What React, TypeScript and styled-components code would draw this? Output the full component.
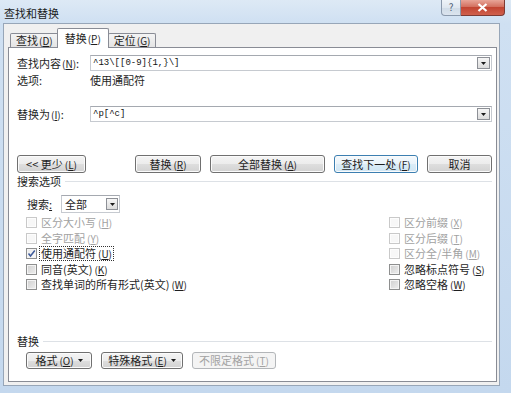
import React from 'react';
import styled, { createGlobalStyle } from 'styled-components';

const GlobalStyle = createGlobalStyle`
  html, body { margin: 0; padding: 0; }
  body {
    width: 511px;
    height: 393px;
    overflow: hidden;
    font-family: "Noto Sans CJK SC", "Noto Sans", sans-serif;
    font-size: 11px;
    line-height: 13px;
    color: #1e1e1e;
    background: #c6d9ee;
  }
`;

const Window = styled.div`
  width: 511px;
  height: 393px;
  display: flex;
  flex-direction: column;
  background: linear-gradient(180deg, #dde9f5 0px, #cfe0f2 23px, #c4d8ee 100%);
`;

const TitleBar = styled.div`
  height: 23px;
  flex: none;
  display: flex;
  justify-content: space-between;
  align-items: flex-start;
`;

const Title = styled.div`
  padding: 7px 0 0 4px;
  color: #1b1b1b;
`;

const Caption = styled.div`
  display: flex;
  margin-right: 6px;
`;

const HelpButton = styled.div`
  width: 20px;
  height: 16px;
  box-sizing: border-box;
  border: 1px solid #8a99ac;
  border-top: none;
  border-radius: 0 0 0 4px;
  background: linear-gradient(180deg, #eef3f8 0%, #dfe7ef 50%, #cfdbe7 51%, #dbe4ee 100%);
  color: #4d5d74;
  font-size: 10px;
  line-height: 14px;
  text-align: center;
`;

const CloseButton = styled.div`
  width: 44px;
  height: 16px;
  box-sizing: border-box;
  border: 1px solid #7d3a33;
  border-top: none;
  border-left: none;
  border-radius: 0 0 4px 0;
  background: linear-gradient(180deg, #e8a598 0%, #d3705f 45%, #c24532 50%, #d0604c 100%);
  display: flex;
  align-items: center;
  justify-content: center;
`;

const Client = styled.div`
  flex: 1;
  margin: 0 11px 7px 3px;
  border: 1px solid #97a6b8;
  background: #f0f0f0;
  padding: 4px 2px 3px 4px;
  display: flex;
  flex-direction: column;
`;

const TabStrip = styled.div`
  height: 19px;
  flex: none;
  display: flex;
  align-items: flex-end;
  padding-left: 2px;
`;

const Tab = styled.div<{ $active?: boolean }>`
  box-sizing: border-box;
  height: ${({ $active }) => ($active ? '20px' : '14px')};
  margin: ${({ $active }) => ($active ? '0 -1px -1px -2px' : '0')};
  padding: ${({ $active }) => ($active ? '3px 7px 0' : '0 5px')};
  border: 1px solid #898c95;
  border-bottom: none;
  border-radius: 2px 2px 0 0;
  background: ${({ $active }) => ($active ? '#ffffff' : 'linear-gradient(180deg, #f4f4f4, #e4e4e4)')};
  position: relative;
  z-index: ${({ $active }) => ($active ? 2 : 1)};
  white-space: nowrap;
`;

const Panel = styled.div`
  flex: 1;
  background: #fff;
  border: 1px solid #898c95;
  padding: 7px 4px 12px 8px;
  display: flex;
  flex-direction: column;
`;

const Key = styled.span<{ $gap?: boolean }>`
  font-size: 10px;
  margin-left: ${({ $gap }) => ($gap ? '2px' : '1px')};
  u { text-decoration: underline; text-underline-offset: 1px; }
`;

const FieldRow = styled.div<{ $top: number }>`
  display: flex;
  align-items: center;
  height: 16px;
  margin-top: ${({ $top }) => $top}px;
`;

const FieldLabel = styled.div`
  width: 73px;
  flex: none;
  white-space: nowrap;
`;

const Combo = styled.div`
  flex: 1;
  height: 16px;
  box-sizing: border-box;
  border: 1px solid #c6cad0;
  border-top-color: #a5a9b0;
  display: flex;
  align-items: center;
  justify-content: space-between;
  padding: 0 1px 0 2px;
  font-family: "Liberation Mono", "DejaVu Sans Mono", monospace;
  font-size: 9px;
  color: #111;
`;

const DropButton = styled.div<{ $size?: number }>`
  width: ${({ $size }) => $size ?? 13}px;
  height: ${({ $size }) => ($size ? $size : 12)}px;
  box-sizing: border-box;
  border: 1px solid #8d9096;
  background: linear-gradient(180deg, #f6f6f6, #dcdcdc);
  display: flex;
  align-items: center;
  justify-content: center;
  flex: none;
`;

const OptionRow = styled.div`
  display: flex;
  height: 13px;
  margin-top: 3px;
`;

const ButtonRow = styled.div`
  display: flex;
  align-items: center;
  margin-top: 33px;
`;

const ButtonGroup = styled.div<{ $gap: number }>`
  display: flex;
  gap: ${({ $gap }) => $gap}px;
  margin-left: auto;
`;

const PushButton = styled.div<{ $w: number; $h?: number; $default?: boolean; $disabled?: boolean }>`
  width: ${({ $w }) => $w}px;
  height: ${({ $h }) => $h ?? 18}px;
  box-sizing: border-box;
  border: 1px solid ${({ $default, $disabled }) => ($default ? '#3c7fb1' : $disabled ? '#b3b6b9' : '#707070')};
  border-radius: 3px;
  background: ${({ $default, $disabled }) =>
    $disabled
      ? '#f4f4f4'
      : $default
      ? 'linear-gradient(180deg, #f5fafd 0%, #e9f3fa 50%, #dbecf7 51%, #d0e6f4 100%)'
      : 'linear-gradient(180deg, #f4f4f4 0%, #ececec 50%, #dedede 51%, #d2d2d2 100%)'};
  box-shadow: inset 0 0 0 1px ${({ $disabled }) => ($disabled ? '#f4f4f4' : '#fbfbfb')};
  color: ${({ $disabled }) => ($disabled ? '#a3a3a3' : '#1e1e1e')};
  display: flex;
  align-items: center;
  justify-content: center;
  white-space: nowrap;
  flex: none;
`;

const GroupHeader = styled.div<{ $top: number }>`
  display: flex;
  align-items: center;
  height: 13px;
  margin-top: ${({ $top }) => $top}px;
  white-space: nowrap;
  &::after {
    content: '';
    flex: 1;
    height: 1px;
    margin-left: 4px;
    background: #dde1e6;
  }
`;

const SearchRow = styled.div`
  display: flex;
  align-items: center;
  height: 18px;
  margin: 7px 0 0 10px;
`;

const SearchLabel = styled.div`
  width: 34px;
  u { text-decoration: underline; }
`;

const Select = styled.div`
  width: 59px;
  height: 18px;
  box-sizing: border-box;
  border: 1px solid #c6cad0;
  border-top-color: #a5a9b0;
  display: flex;
  align-items: center;
  justify-content: space-between;
  padding: 0 1px 0 3px;
`;

const CheckGrid = styled.div`
  display: grid;
  grid-template-columns: 363px auto;
  grid-auto-rows: 15.5px;
  margin: 2px 0 0 9px;
`;

const CheckItem = styled.div<{ $disabled?: boolean }>`
  display: flex;
  align-items: center;
  gap: 4px;
  white-space: nowrap;
  color: ${({ $disabled }) => ($disabled ? '#a2a2a2' : '#1e1e1e')};
`;

const Box = styled.span<{ $disabled?: boolean; $checked?: boolean }>`
  width: 11px;
  height: 11px;
  box-sizing: border-box;
  flex: none;
  border: 1px solid ${({ $disabled }) => ($disabled ? '#c9c9c9' : '#8e8f8f')};
  background: ${({ $disabled, $checked }) =>
    $disabled ? '#f7f7f7' : $checked ? 'linear-gradient(135deg, #e9e9e9, #fbfbfb)' : 'linear-gradient(135deg, #cfcfcf, #efefef)'};
  box-shadow: inset 0 0 0 1px ${({ $disabled }) => ($disabled ? '#fdfdfd' : '#f4f4f4')};
  display: flex;
  align-items: center;
  justify-content: center;
`;

const FocusLabel = styled.span`
  outline: 1px dotted #333;
  outline-offset: 0;
  padding: 0 1px;
  margin-left: -1px;
`;

const BottomSection = styled.div`
  margin-top: auto;
`;

const BottomButtons = styled.div`
  display: flex;
  gap: 9px;
  margin: 4px 0 0 9px;
`;

const Arrow = styled.span`
  margin-left: 4px;
  display: inline-flex;
`;

function Tri() {
  return (
    <svg width={5} height={3} viewBox="0 0 5 3">
      <path d="M0 0 H5 L2.5 3 Z" fill="#1b1b1b" />
    </svg>
  );
}

function K({ k, gap }: { k: string; gap?: boolean }) {
  return (
    <Key $gap={gap}>
      (<u>{k}</u>)
    </Key>
  );
}

function Check({ label, k, disabled, checked, focus }: { label: string; k: string; disabled?: boolean; checked?: boolean; focus?: boolean }) {
  const text = (
    <>
      {label}
      <K k={k} gap />
    </>
  );
  return (
    <CheckItem $disabled={disabled}>
      <Box $disabled={disabled} $checked={checked}>
        {checked && (
          <svg width="9" height="9" viewBox="0 0 9 9">
            <path d="M1.5 4.5 L3.5 7 L7.8 1.5" stroke="#3d5a9a" strokeWidth="1.5" fill="none" />
          </svg>
        )}
      </Box>
      {focus ? <FocusLabel>{text}</FocusLabel> : <span>{text}</span>}
    </CheckItem>
  );
}

export default function App() {
  return (
    <>
      <GlobalStyle />
      <Window>
        <TitleBar>
          <Title>查找和替换</Title>
          <Caption>
            <HelpButton>?</HelpButton>
            <CloseButton>
              <svg width="11" height="9" viewBox="0 0 11 9">
                <path d="M1.5 1 L9.5 8 M9.5 1 L1.5 8" stroke="#fff" strokeWidth="2.2" />
              </svg>
            </CloseButton>
          </Caption>
        </TitleBar>
        <Client>
          <TabStrip>
            <Tab>
              查找<K k="D" />
            </Tab>
            <Tab $active>
              替换<K k="P" />
            </Tab>
            <Tab>
              定位<K k="G" />
            </Tab>
          </TabStrip>
          <Panel>
            <FieldRow $top={0}>
              <FieldLabel>
                查找内容<K k="N" />:
              </FieldLabel>
              <Combo>
                <span>^13\[[0-9]{'{'}1,{'}'}\]</span>
                <DropButton>
                  <Tri />
                </DropButton>
              </Combo>
            </FieldRow>
            <OptionRow>
              <FieldLabel>选项:</FieldLabel>
              <span>使用通配符</span>
            </OptionRow>
            <FieldRow $top={19}>
              <FieldLabel>
                替换为<K k="I" />:
              </FieldLabel>
              <Combo>
                <span>^p[^c]</span>
                <DropButton>
                  <Tri />
                </DropButton>
              </Combo>
            </FieldRow>
            <ButtonRow>
              <PushButton $w={69}>
                &lt;&lt; 更少<K k="L" gap />
              </PushButton>
              <ButtonGroup $gap={9}>
                <PushButton $w={66}>
                  替换<K k="R" gap />
                </PushButton>
                <PushButton $w={115}>
                  全部替换<K k="A" gap />
                </PushButton>
                <PushButton $w={84} $default>
                  查找下一处<K k="F" gap />
                </PushButton>
                <PushButton $w={65}>取消</PushButton>
              </ButtonGroup>
            </ButtonRow>
            <GroupHeader $top={2}>搜索选项</GroupHeader>
            <SearchRow>
              <SearchLabel>
                搜索<u>:</u>
              </SearchLabel>
              <Select>
                <span>全部</span>
                <DropButton $size={12}>
                  <Tri />
                </DropButton>
              </Select>
            </SearchRow>
            <CheckGrid>
              <Check label="区分大小写" k="H" disabled />
              <Check label="区分前缀" k="X" disabled />
              <Check label="全字匹配" k="Y" disabled />
              <Check label="区分后缀" k="T" disabled />
              <Check label="使用通配符" k="U" checked focus />
              <Check label="区分全/半角" k="M" disabled />
              <Check label="同音(英文)" k="K" />
              <Check label="忽略标点符号" k="S" />
              <Check label="查找单词的所有形式(英文)" k="W" />
              <Check label="忽略空格" k="W" />
            </CheckGrid>
            <BottomSection>
              <GroupHeader $top={0}>替换</GroupHeader>
              <BottomButtons>
                <PushButton $w={66} $h={17}>
                  格式<K k="O" gap />
                  <Arrow>
                    <Tri />
                  </Arrow>
                </PushButton>
                <PushButton $w={82} $h={17}>
                  特殊格式<K k="E" gap />
                  <Arrow>
                    <Tri />
                  </Arrow>
                </PushButton>
                <PushButton $w={84} $h={17} $disabled>
                  不限定格式<K k="T" gap />
                </PushButton>
              </BottomButtons>
            </BottomSection>
          </Panel>
        </Client>
      </Window>
    </>
  );
}
